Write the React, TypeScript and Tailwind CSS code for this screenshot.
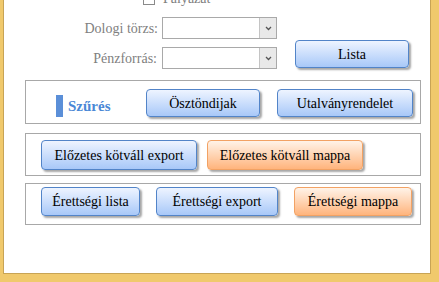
import React from 'react';

const serifStack =
  '"Liberation Serif", Tinos, "Times New Roman", Times, "Noto Serif", "DejaVu Serif", serif';

function Btn({ label, w, h = 28, orange = false }: { label: string; w: number; h?: number; orange?: boolean }) {
  return (
    <button
      style={{ width: w, height: h }}
      className={
        'flex shrink-0 items-center justify-center rounded-[4px] border text-[14px] text-black shadow-[2px_2px_2px_rgba(0,0,0,0.35)] ' +
        (orange
          ? 'border-[#f2a264] bg-linear-to-b from-[#fff3e8] to-[#ffb47c]'
          : 'border-[#5284c8] bg-linear-to-b from-[#eef4ff] to-[#a8c8f8]')
      }
    >
      {label}
    </button>
  );
}

function Select() {
  return (
    <div className="flex h-[22px] w-[115px] border border-[#a9a9a9] bg-white">
      <div className="flex-1" />
      <div className="flex w-[17px] items-center justify-center border-l border-[#c4c4c4] bg-[#e9e9e9]">
        <svg width="7" height="5" viewBox="0 0 7 5">
          <path d="M1 1 L3.5 3.5 L6 1" fill="none" stroke="#555" strokeWidth="1.3" />
        </svg>
      </div>
    </div>
  );
}

export default function App() {
  return (
    <div className="h-[282px] w-[439px] overflow-hidden bg-[#f0c96c]" style={{ fontFamily: serifStack }}>
      <div className="ml-[3px] h-[274px] w-[428px] border-b border-l border-r border-[#c8a455] bg-white">
        {/* Top form */}
        <div className="flex items-start">
          <div className="flex w-[273px] flex-col">
            <div className="-mt-[7px] flex h-[12px] items-center">
              <div className="ml-[139px] h-[12px] w-[12px] border border-[#8a8a8a] bg-white" />
              <span className="ml-[8px] text-[14px] leading-none text-[#808080]">Pályázat</span>
            </div>
            <div className="mt-[12px] flex h-[22px] items-center">
              <span className="w-[154px] text-right text-[14px] text-[#808080]">Dologi törzs:</span>
              <div className="ml-[4px]">
                <Select />
              </div>
            </div>
            <div className="mt-[8px] flex h-[22px] items-center">
              <span className="w-[154px] text-right text-[14px] text-[#808080]">Pénzforrás:</span>
              <div className="ml-[5px]">
                <Select />
              </div>
            </div>
          </div>
          <div className="ml-[18px] mt-[40px]">
            <Btn label="Lista" w={114} />
          </div>
        </div>

        {/* Szűrés */}
        <div className="ml-[21px] mt-[11px] flex h-[44px] w-[396px] items-start border border-[#a8a8a8] pt-[8px]">
          <div className="ml-[30px] flex w-[90px] items-center self-center">
            <div className="h-[22px] w-[7px] bg-[#5b8fd8]" />
            <span className="ml-[5px] text-[15px] font-bold text-[#4a88d6]">Szűrés</span>
          </div>
          <Btn label="Ösztöndijak" w={114} />
          <div className="ml-[17px]">
            <Btn label="Utalványrendelet" w={136} />
          </div>
        </div>

        {/* Előzetes kötváll */}
        <div className="ml-[21px] mt-[9px] flex h-[43px] w-[396px] items-start gap-[10px] border border-[#a8a8a8] pl-[15px] pt-[6px]">
          <Btn label="Előzetes kötváll export" w={156} h={30} />
          <Btn label="Előzetes kötváll mappa" w={156} h={30} orange />
        </div>

        {/* Érettségi */}
        <div className="ml-[21px] mt-[7px] flex h-[42px] w-[396px] items-start gap-[16px] border border-[#a8a8a8] pl-[15px] pt-[3px]">
          <Btn label="Érettségi lista" w={99} h={29} />
          <Btn label="Érettségi export" w={122} h={29} />
          <Btn label="Érettségi mappa" w={118} h={29} orange />
        </div>
      </div>
    </div>
  );
}
